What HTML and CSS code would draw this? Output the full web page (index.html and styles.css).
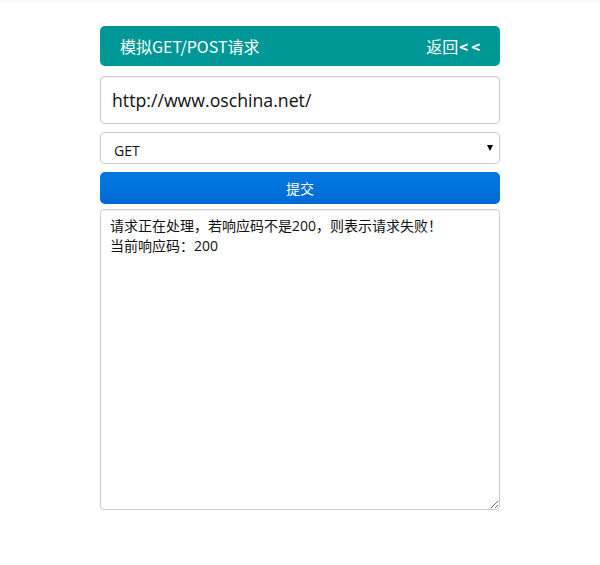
FILE: index.html
```html
<!DOCTYPE html>
<html lang="zh">
<head>
<meta charset="utf-8">
<title>模拟GET/POST请求</title>
<link rel="stylesheet" href="styles.css">
</head>
<body>
<div class="topstrip"></div>
<div class="wrap">
  <div class="header">
    <span class="title">模拟GET/POST请求</span>
    <span class="back">返回<span class="arrows">&lt;&lt;</span></span>
  </div>
  <input class="url" type="text" value="http://www.oschina.net/">
  <div class="select-wrap">
    <select class="method">
      <option>GET</option>
      <option>POST</option>
    </select>
  </div>
  <button class="submit">提交</button>
  <textarea class="result">请求正在处理，若响应码不是200，则表示请求失败！
当前响应码：200</textarea>
</div>
</body>
</html>
```
FILE: styles.css
```css
html, body {
  margin: 0;
  padding: 0;
  background: #fff;
  font-family: "Open Sans", "Noto Sans CJK SC", sans-serif;
}
.topstrip {
  height: 2px;
  background: #f7f7f7;
}
.wrap {
  width: 400px;
  margin: 24px auto 0;
  display: flex;
  flex-direction: column;
}
.header {
  height: 40px;
  background: #009896;
  border-radius: 5px;
  color: #fff;
  display: flex;
  align-items: center;
  justify-content: space-between;
  padding: 0 20px;
  font-size: 16px;
  font-family: "Noto Sans CJK SC", sans-serif;
  white-space: nowrap;
}
.back {
  white-space: nowrap;
}
.arrows {
  letter-spacing: 3px;
  font-weight: 700;
  margin-left: 1px;
  margin-right: -3px;
  font-size: 15px;
}
.url {
  margin-top: 10px;
  height: 48px;
  box-sizing: border-box;
  border: 1px solid #ccc;
  border-radius: 4px;
  padding: 0 11px;
  font-size: 17.7px;
  color: #111;
  font-family: "Open Sans", "Noto Sans CJK SC", sans-serif;
  box-shadow: inset 0 1px 1px rgba(0,0,0,0.05);
  outline: none;
}
.select-wrap {
  position: relative;
  margin-top: 8px;
}
.select-wrap::after {
  content: "";
  position: absolute;
  right: 7px;
  top: 13px;
  border-left: 3px solid transparent;
  border-right: 3px solid transparent;
  border-top: 6px solid #000;
}
.method {
  width: 100%;
  height: 32px;
  box-sizing: border-box;
  -webkit-appearance: none;
  appearance: none;
  background: #fff;
  border: 1px solid #ccc;
  border-radius: 4px;
  padding: 4px 13px 0;
  font-size: 14px;
  color: #111;
  font-family: "Open Sans", "Noto Sans CJK SC", sans-serif;
  outline: none;
}
.submit {
  margin-top: 8px;
  height: 32px;
  border: none;
  border-radius: 5px;
  background: linear-gradient(#0079e0, #006ad6);
  color: #fff;
  font-size: 14px;
  font-family: "Noto Sans CJK SC", sans-serif;
  padding: 0;
}
.result {
  margin-top: 5px;
  height: 301px;
  box-sizing: border-box;
  border: 1px solid #ccc;
  border-radius: 4px;
  padding: 6px 9px;
  font-size: 14px;
  line-height: 20px;
  color: #111;
  font-family: "Open Sans", "Noto Sans CJK SC", sans-serif;
  outline: none;
  box-shadow: inset 0 1px 1px rgba(0,0,0,0.05);
}
```
